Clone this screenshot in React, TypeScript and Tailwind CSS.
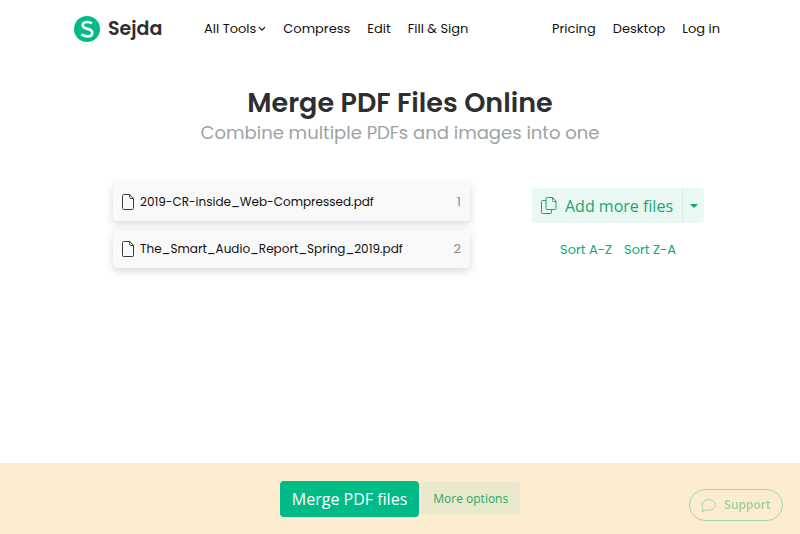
const files = ['2019-CR-inside_Web-Compressed.pdf', 'The_Smart_Audio_Report_Spring_2019.pdf'];

function Logo() {
  return (
    <svg viewBox="0 0 26 26" className="size-[26px]" aria-hidden="true">
      <circle cx="13" cy="13" r="13" fill="#00ba88" />
      <path
        d="M17.800 7.400C16.700 6.500 15.100 6 13.400 6 10.500 6 8.700 7.400 8.700 9.300c0 4.900 9.600 2.300 9.600 7.400 0 2.200-2 3.700-5.100 3.700-2.300 0-4.400-.8-5.800-2.100"
        fill="none"
        stroke="#fff"
        strokeWidth="2.7"
      />
    </svg>
  );
}

function FileIcon() {
  return (
    <svg viewBox="0 0 12 16" className="h-4 w-3" fill="none" stroke="#3c3c3c" aria-hidden="true">
      <path d="M1.500.5h6.200l3.800 3.800v10.200a1 1 0 0 1-1 1h-9a1 1 0 0 1-1-1v-13a1 1 0 0 1 1-1Z" />
      <path d="M7.700.5v3a1 1 0 0 0 1 1h2.800" />
    </svg>
  );
}

function CopyIcon() {
  return (
    <svg viewBox="0 0 16 17" className="h-[17px] w-4" fill="none" stroke="currentColor" aria-hidden="true">
      <path d="M6.500.5h5l3.500 3.600v7.400a1 1 0 0 1-1 1H6a1 1 0 0 1-1-1v-10a1 1 0 0 1 1-1Z" />
      <path d="M11.500.5v3a1 1 0 0 0 1 1H15M5 3.500H1.500a1 1 0 0 0-1 1v11a1 1 0 0 0 1 1h8a1 1 0 0 0 1-1v-3" />
    </svg>
  );
}

export default function App() {
  return (
    <div className="flex min-h-screen flex-col bg-white font-[Poppins,Inter,sans-serif] text-[#111]">
      <header className="flex h-[58px] items-center pr-20 pl-[74px]">
        <a href="#home" className="flex w-[130px] items-center gap-2 text-[19px] font-semibold text-[#2e2e2e]">
          <Logo />
          Sejda
        </a>
        <nav className="flex flex-1 items-center gap-[17px] text-[13px] leading-[22px] whitespace-nowrap">
          <button type="button" className="flex items-center gap-[2px]">
            All Tools
            <svg viewBox="0 0 8 6" className="h-[6px] w-2" fill="none" stroke="currentColor" strokeWidth="1.2" aria-hidden="true">
              <path d="m1 1.200 3 3 3-3" />
            </svg>
          </button>
          <a href="#compress">Compress</a>
          <a href="#edit">Edit</a>
          <a href="#sign">Fill &amp; Sign</a>
          <a href="#pricing" className="ml-auto">Pricing</a>
          <a href="#desktop">Desktop</a>
          <a href="#login">Log in</a>
        </nav>
      </header>

      <main className="flex-1">
        <div className="pt-[27px] text-center">
          <h1 className="text-[27px] leading-9 font-semibold text-[#2e2e2e]">Merge PDF Files Online</h1>
          <p className="text-lg leading-6 text-[#9aa3a6]">Combine multiple PDFs and images into one</p>
        </div>
        <div className="flex items-start gap-[62px] pt-[38px] pr-24 pl-[113px]">
          <ol className="flex flex-1 flex-col gap-[9px]">
            {files.map((name, i) => (
              <li
                key={name}
                className="flex h-[38px] items-center gap-[6px] rounded bg-[#f9f9f9] px-[9px] text-[12px] shadow-[0_3px_8px_rgba(40,40,80,0.18)]"
              >
                <FileIcon />
                <span className="flex-1">{name}</span>
                <span className="text-[13px] text-[#8a8a8a]">{i + 1}</span>
              </li>
            ))}
          </ol>
          <div className="w-[172px] pt-[5px]">
            <div className="flex h-[35px] overflow-hidden rounded bg-[#eaf8f4] font-['Segoe_UI','Open_Sans',sans-serif] text-[#14a674]">
              <button type="button" className="flex flex-1 items-center justify-center gap-2 text-base whitespace-nowrap">
                <CopyIcon />
                Add more files
              </button>
              <button type="button" aria-label="More sources" className="flex w-[22px] items-center justify-center border-l border-[#d7efe7]">
                <svg viewBox="0 0 8 4" className="h-1 w-2" fill="currentColor" aria-hidden="true">
                  <path d="M0 0h8L4 4Z" />
                </svg>
              </button>
            </div>
            <div className="flex justify-center gap-3 pt-[17px] text-[13px] leading-5 text-[#14a674]">
              <button type="button">Sort A-Z</button>
              <button type="button">Sort Z-A</button>
            </div>
          </div>
        </div>
      </main>

      <footer className="flex h-[71px] items-center justify-center gap-[2px] bg-[#feecd1] font-['Segoe_UI','Open_Sans',sans-serif]">
        <button type="button" className="h-9 rounded bg-[#00ba88] px-3 text-base font-medium text-white">
          Merge PDF files
        </button>
        <button type="button" className="h-[33px] rounded bg-[#ebe9cd] px-3 text-[12px] text-[#1fa968]">
          More options
        </button>
      </footer>

      <button
        type="button"
        className="fixed right-[17px] bottom-[13px] flex h-8 w-[94px] items-center justify-center gap-2 rounded-full border border-[#a5d6a9] font-['Segoe_UI','Open_Sans',sans-serif] text-[12px] font-semibold text-[#98d1a0]"
      >
        <svg viewBox="0 0 15 13" className="h-[13px] w-[15px]" fill="none" stroke="currentColor" aria-hidden="true">
          <path d="M1.800 8.800C-.5 4.400 2.700.6 7.600.6c4 0 6.800 2.300 6.800 5.300s-2.800 5.300-6.800 5.300c-1 0-1.900-.1-2.700-.4-1.200 1-2.600 1.500-4.300 1.500.9-.9 1.300-2 1.200-3.500Z" />
        </svg>
        Support
      </button>
    </div>
  );
}
